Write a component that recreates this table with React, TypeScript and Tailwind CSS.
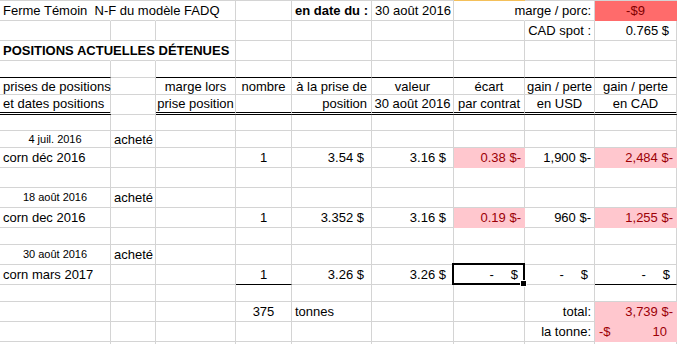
import type { ReactNode } from 'react';

const COLS =
  'grid grid-cols-[111px_45px_80px_56px_80px_82px_71px_70px_82px]';

type Bottom = 'grid' | 'black' | 'double';

interface CellProps {
  children?: ReactNode;
  className?: string;
  noR?: boolean;
  fill?: boolean;
  bottom?: Bottom;
}

function Cell({ children, className = '', noR, fill, bottom = 'grid' }: CellProps) {
  const right = noR || fill ? 'border-r-transparent' : 'border-r-[#d4d4d4]';
  let b = 'border-b border-b-[#d4d4d4]';
  if (fill) b = 'border-b border-b-transparent';
  if (bottom === 'black') b = 'border-b border-b-black';
  if (bottom === 'double') b = 'border-b-[3px] border-double border-b-black';
  return (
    <div
      className={`flex items-center whitespace-pre border-r ${right} ${b} px-[3px] leading-[15px] ${className}`}
    >
      {children}
    </div>
  );
}

function Row({ h, children }: { h: string; children: ReactNode }) {
  return <div className={`${COLS} ${h}`}>{children}</div>;
}

function Blank({ h }: { h: string }) {
  return (
    <Row h={h}>
      <Cell />
      <Cell />
      <Cell />
      <Cell />
      <Cell />
      <Cell />
      <Cell />
      <Cell />
      <Cell />
    </Row>
  );
}

// cellule "- $" en format comptable
function Zero({ bottom }: { bottom?: Bottom }) {
  return (
    <Cell className="justify-end pr-[6px]" bottom={bottom}>
      <span>-</span>
      <span className="ml-[17px]">$</span>
    </Cell>
  );
}

const bad = 'justify-end bg-[#ffc7ce] text-[#9c0006]';

export default function App() {
  return (
    <div className="h-[344px] w-[677px] overflow-hidden bg-white font-['Liberation_Sans',Arial,sans-serif] text-[13px] text-black">
      {/* ligne du haut de la grille, colonne G sélectionnée */}
      <div className={`${COLS} h-px`}>
        <div className="bg-[#d4d4d4]" />
        <div className="bg-[#d4d4d4]" />
        <div className="bg-[#d4d4d4]" />
        <div className="bg-[#d4d4d4]" />
        <div className="bg-[#d4d4d4]" />
        <div className="bg-[#d4d4d4]" />
        <div className="bg-[#f4c05a]" />
        <div className="bg-[#d4d4d4]" />
        <div className="bg-[#d4d4d4]" />
      </div>

      <Row h="h-[20px]">
        <Cell noR>Ferme Témoin  N-F du modèle FADQ</Cell>
        <Cell noR />
        <Cell />
        <Cell />
        <Cell className="justify-end font-bold">en date du :</Cell>
        <Cell>30 août 2016</Cell>
        <Cell noR />
        <Cell className="justify-end">marge / porc:</Cell>
        <Cell fill className="justify-center bg-[#ff6b6b] text-[#7f0000]">
          -$9
        </Cell>
      </Row>

      <Row h="h-[20px]">
        <Cell />
        <Cell />
        <Cell />
        <Cell />
        <Cell />
        <Cell />
        <Cell />
        <Cell className="justify-end">CAD spot :</Cell>
        <Cell className="justify-end pr-[7px]">0.765 $</Cell>
      </Row>

      <Row h="h-[20px]">
        <Cell noR className="font-bold">
          POSITIONS ACTUELLES DÉTENUES
        </Cell>
        <Cell noR />
        <Cell />
        <Cell />
        <Cell />
        <Cell />
        <Cell />
        <Cell />
        <Cell />
      </Row>

      <Row h="h-[17px]">
        <Cell bottom="black" />
        <Cell />
        <Cell bottom="black" />
        <Cell bottom="black" />
        <Cell bottom="black" />
        <Cell bottom="black" />
        <Cell bottom="black" />
        <Cell bottom="black" />
        <Cell bottom="black" />
      </Row>

      <Row h="h-[17px]">
        <Cell>prises de positions</Cell>
        <Cell />
        <Cell className="justify-center">marge lors</Cell>
        <Cell className="justify-center">nombre</Cell>
        <Cell className="justify-end pr-[4px]">à la prise de</Cell>
        <Cell className="justify-center">valeur</Cell>
        <Cell className="justify-center">écart</Cell>
        <Cell className="justify-center">gain / perte</Cell>
        <Cell className="justify-center">gain / perte</Cell>
      </Row>

      <Row h="h-[20px]">
        <Cell bottom="double">et dates positions</Cell>
        <Cell />
        <Cell bottom="double" className="justify-center">
          prise position
        </Cell>
        <Cell bottom="double" />
        <Cell bottom="double" className="justify-end pr-[4px]">
          position
        </Cell>
        <Cell bottom="double" className="justify-center">
          30 août 2016
        </Cell>
        <Cell bottom="double" className="justify-center">
          par contrat
        </Cell>
        <Cell bottom="double" className="justify-center">
          en USD
        </Cell>
        <Cell bottom="double" className="justify-center">
          en CAD
        </Cell>
      </Row>

      <Blank h="h-[16px]" />

      <Row h="h-[17px]">
        <Cell className="justify-center text-[11px]">4 juil. 2016</Cell>
        <Cell>acheté</Cell>
        <Cell />
        <Cell />
        <Cell />
        <Cell />
        <Cell />
        <Cell />
        <Cell />
      </Row>

      <Row h="h-[20px]">
        <Cell>corn déc 2016</Cell>
        <Cell />
        <Cell />
        <Cell className="justify-center">1</Cell>
        <Cell className="justify-end pr-[7px]">3.54 $</Cell>
        <Cell className="justify-end pr-[7px]">3.16 $</Cell>
        <Cell fill className={bad}>
          0.38 $-
        </Cell>
        <Cell className="justify-end">1,900 $-</Cell>
        <Cell fill className={bad}>
          2,484 $-
        </Cell>
      </Row>

      <Blank h="h-[20px]" />

      <Row h="h-[20px]">
        <Cell className="justify-center text-[11px]">18 août 2016</Cell>
        <Cell>acheté</Cell>
        <Cell />
        <Cell />
        <Cell />
        <Cell />
        <Cell />
        <Cell />
        <Cell />
      </Row>

      <Row h="h-[20px]">
        <Cell>corn dec 2016</Cell>
        <Cell />
        <Cell />
        <Cell className="justify-center">1</Cell>
        <Cell className="justify-end pr-[7px]">3.352 $</Cell>
        <Cell className="justify-end pr-[7px]">3.16 $</Cell>
        <Cell fill className={bad}>
          0.19 $-
        </Cell>
        <Cell className="justify-end">960 $-</Cell>
        <Cell fill className={bad}>
          1,255 $-
        </Cell>
      </Row>

      <Blank h="h-[17px]" />

      <Row h="h-[20px]">
        <Cell className="justify-center text-[11px]">30 août 2016</Cell>
        <Cell>acheté</Cell>
        <Cell />
        <Cell />
        <Cell />
        <Cell />
        <Cell />
        <Cell />
        <Cell />
      </Row>

      <Row h="h-[20px]">
        <Cell>corn mars 2017</Cell>
        <Cell />
        <Cell />
        <Cell bottom="black" className="justify-center">
          1
        </Cell>
        <Cell className="justify-end pr-[7px]">3.26 $</Cell>
        <Cell className="justify-end pr-[7px]">3.26 $</Cell>
        <Cell className="relative justify-end pr-[6px]">
          <span>-</span>
          <span className="ml-[17px]">$</span>
          <div className="absolute -top-[2px] -right-px -bottom-px -left-[2px] border-2 border-black" />
          <div className="absolute -right-[3px] -bottom-[3px] h-[7px] w-[7px] border border-white bg-black" />
        </Cell>
        <Zero />
        <Zero bottom="black" />
      </Row>

      <Blank h="h-[17px]" />

      <Row h="h-[20px]">
        <Cell />
        <Cell />
        <Cell />
        <Cell className="justify-center">375</Cell>
        <Cell>tonnes</Cell>
        <Cell />
        <Cell />
        <Cell className="justify-end">total:</Cell>
        <Cell fill className={bad}>
          3,739 $-
        </Cell>
      </Row>

      <Row h="h-[20px]">
        <Cell />
        <Cell />
        <Cell />
        <Cell />
        <Cell />
        <Cell />
        <Cell />
        <Cell className="justify-end">la tonne:</Cell>
        <Cell fill className="justify-between bg-[#ffc7ce] pl-[4px] pr-[9px] text-[#9c0006]">
          <span>-$</span>
          <span>10</span>
        </Cell>
      </Row>

      <Blank h="h-[20px]" />
    </div>
  );
}
